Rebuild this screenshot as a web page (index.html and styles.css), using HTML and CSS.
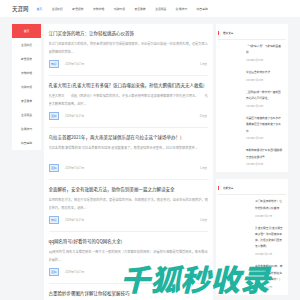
FILE: index.html
```html
<!DOCTYPE html>
<html lang="zh-CN">

<head>
    <meta charset="UTF-8" />
    <meta name="viewport" content="width=device-width, initial-scale=1.0" />
    <title>天涯网</title>
    <link rel="stylesheet" href="styles.css">
</head>

<body>
    <header class="top">
        <div class="logo">天涯网</div>
        <nav class="nav">
            <a class="active" href="#">首页</a>
            <a href="#">生活妙招</a>
            <a href="#">家居保养</a>
            <a href="#">衣物护理</a>
            <a href="#">低碳环保</a>
            <a href="#">安全急救</a>
            <a href="#">生活用品</a>
            <a href="#">防暑技巧</a>
            <a href="#">科普基础</a>
        </nav>
    </header>

    <div class="wrap">
        <!-- 左侧分类 -->
        <aside class="side">
            <a class="active" href="#">首页</a>
            <a href="#">生活妙招</a>
            <a href="#">家居保养</a>
            <a href="#">衣物护理</a>
            <a href="#">低碳环保</a>
            <a href="#">安全急救</a>
            <a href="#">生活用品</a>
            <a href="#">防暑技巧</a>
            <a href="#">科普基础</a>
        </aside>

        <!-- 文章列表 -->
        <main class="list">
            <div class="post">
                <h2>江门买金饰的地方：让你轻松挑选心仪首饰</h2>
                <p>在江门这座充满活力的城市，购买金首饰的地方可谓是琳琅满目。无论是为自己挑选一份珍贵的礼物，还是为家人选购婚嫁的首饰...</p>
                <div class="meta">
                    <span class="tag">知识</span>
                    <span class="date">2024年7月17日</span>
                    <span class="views">1浏览</span>
                </div>
            </div>
            <div class="post">
                <h2>孔雀大明王(孔雀大明王有多强？张口吞噬如来佛，孙悟大鹏佛们西天无人敢惹)</h2>
                <p>孔雀大明王　　说起《西游记》中那些强势的妖王，许多人都会想到那位连如来佛都敢吞下的孔雀大明王。　　孔雀大鹏佛家后来佛，此时...</p>
                <div class="meta">
                    <span class="tag">百科</span>
                    <span class="date">2024年7月17日</span>
                    <span class="views">0浏览</span>
                </div>
            </div>
            <div class="post">
                <h2>乌拉圭首都2021年，两大南美足球俱乐部在乌拉圭这个球场举办！)</h2>
                <p>乌拉圭首都 蒙得维的亚 乌拉圭首都百年球场 足球盛宴来了，南美足球联合会宣布，2021年南美解放者杯...</p>
                <div class="meta">
                    <span class="tag">百科</span>
                    <span class="date">2024年7月17日</span>
                    <span class="views">1浏览</span>
                </div>
            </div>
            <div class="post">
                <h2>全面解析，安全有效脱毛方法，助你告别美丽一篇之力解读安全</h2>
                <p>全面的脱毛方法，脱毛不仅是美丽的外表，更是自信的开始。在解脱毛方法，脱毛技巧，自由生长的正确养护，脱毛技巧，脱毛效果，选择...</p>
                <div class="meta">
                    <span class="tag">知识</span>
                    <span class="date">2024年7月17日</span>
                    <span class="views">1浏览</span>
                </div>
            </div>
            <div class="post">
                <h2>qq网名符号(好看符号的QQ网名大全)</h2>
                <p>qq网名符号 网名大全推荐网名 一款不太一般的网名（大家都在找的网名） 好看的头像都是有推荐网名，每天推出好看的...</p>
                <div class="meta">
                    <span class="tag">百科</span>
                    <span class="date">2024年7月17日</span>
                    <span class="views">1浏览</span>
                </div>
            </div>
            <div class="post">
                <h2>古墨脸妙步骤图片详解让你轻松掌握技巧</h2>
                <p>古墨脸妙步骤图片详解，让你在家也能轻松掌握化妆的技巧，从打底到定妆一步一步教你...</p>
            </div>
        </main>

        <!-- 右侧栏 -->
        <div class="right">
            <div class="box">
                <h3>推荐文章</h3>
                <div class="item">
                    <div class="thumb"></div>
                    <div class="info">
                        <div class="t">“飞鹏似人员”飞鹏似的面卖并</div>
                        <div class="d">2024年4月15日</div>
                    </div>
                </div>
                <div class="item">
                    <div class="thumb"></div>
                    <div class="info">
                        <div class="t">学生宿舍的装修方法</div>
                        <div class="d">2024年7月10日</div>
                    </div>
                </div>
                <div class="item">
                    <div class="thumb"></div>
                    <div class="info">
                        <div class="t">_当同QA成一样方式？借成西南之间之可行是性_</div>
                        <div class="d">2024年7月13日</div>
                    </div>
                </div>
                <div class="item">
                    <div class="thumb"></div>
                    <div class="info">
                        <div class="t">机器压力慢慢的变了怎么办吃最能减压压力慢慢的变了怎么办</div>
                        <div class="d">2024年7月15日</div>
                    </div>
                </div>
                <div class="item">
                    <div class="thumb"></div>
                    <div class="info">
                        <div class="t">电影放映最新什么东西?跟踪那已去在在最新号</div>
                        <div class="d">2024年7月20日</div>
                    </div>
                </div>
            </div>

            <div class="box recent">
                <h3>近期文章</h3>
                <div class="item">
                    <div class="thumb"></div>
                    <div class="info">
                        <div class="t">江门买金饰的地方：让你轻松挑选心仪首饰</div>
                        <div class="d">2024年7月17日</div>
                    </div>
                </div>
                <div class="item">
                    <div class="thumb"></div>
                    <div class="info">
                        <div class="t">孔雀大明王(孔雀大明王有多强？张口吞噬如来佛，孙悟大鹏佛们西天无人敢惹)</div>
                        <div class="d">2024年7月17日</div>
                    </div>
                </div>
                <div class="item">
                    <div class="thumb"></div>
                    <div class="info">
                        <div class="t">乌拉圭首都2021年，两大南美足球俱乐部在乌拉圭这个球场举办！)</div>
                        <div class="d">2024年7月17日</div>
                    </div>
                </div>
            </div>
        </div>
    </div>

    <div class="mark">千狐秒收录</div>
</body>

</html>
```

FILE: styles.css
```css
body {
    margin: 0;
    background-color: #f4f5f7;
    font-family: "Noto Sans CJK SC", "Noto Sans", sans-serif;
    color: #333;
}

a {
    text-decoration: none;
    color: inherit;
}

.top {
    height: 17px;
    background-color: white;
    display: flex;
    align-items: center;
    padding-left: 12px;
}

.logo {
    font-size: 5.5px;
    color: #333;
    margin-right: 8px;
}

.nav {
    display: flex;
    gap: 9.5px;
    font-size: 2.8px;
    color: #555;
}

.nav .active {
    color: #2f7ef5;
}

.wrap {
    display: flex;
    align-items: flex-start;
    gap: 2.5px;
    padding: 7px 12px 0;
}

.side {
    width: 29px;
    margin-top: -0.5px;
    background-color: white;
    display: flex;
    flex-direction: column;
}

.side a {
    height: 14px;
    line-height: 14px;
    text-align: center;
    font-size: 2.8px;
    color: #555;
}

.side .active {
    background-color: #f24a4a;
    color: white;
}

.list {
    flex: 1;
    background-color: white;
    padding: 0 5px;
    height: 300px;
}

.post {
    padding: 5px 0 7px;
    border-bottom: 1px solid #f0f0f0;
}

.post h2 {
    margin: 0 0 3px;
    font-size: 4.5px;
    line-height: 8px;
    font-weight: normal;
    color: #333;
}

.post p {
    margin: 0 0 4px;
    font-size: 3.2px;
    line-height: 8px;
    height: 16px;
    overflow: hidden;
    color: #999;
}

.meta {
    display: flex;
    align-items: center;
    height: 8px;
    font-size: 2.8px;
    color: #aaa;
}

.tag {
    padding: 1.2px 1.5px;
    border: 0.5px solid #8db9f2;
    background-color: #e7f0fd;
    color: #3a7de0;
    border-radius: 0.5px;
}

.date {
    margin-left: 6px;
}

.views {
    margin-left: auto;
    margin-right: 1px;
}

.right {
    width: 72px;
    margin-left: 0.5px;
    display: flex;
    flex-direction: column;
    gap: 7px;
}

.box {
    background-color: white;
    padding: 0 2px 2px;
}

.box h3 {
    margin: 0;
    padding: 5px 0 2px 5px;
    line-height: 8px;
    font-size: 2.6px;
    font-weight: normal;
    color: #333;
    border-bottom: 1px solid #eee;
    position: relative;
}

.box h3::before {
    content: "";
    position: absolute;
    left: 0;
    top: 7px;
    width: 0.8px;
    height: 4px;
    background-color: #f24a4a;
}

.item {
    display: flex;
    padding: 3px 0;
}

.thumb {
    width: 28px;
    flex-shrink: 0;
}

.recent .thumb {
    width: 37px;
}

.info {
    flex: 1;
    padding-right: 3px;
}

.info .t {
    font-size: 2.7px;
    line-height: 6.3px;
    color: #444;
}

.info .d {
    margin-top: 1.5px;
    font-size: 2.5px;
    line-height: 6px;
    color: #aaa;
}

.mark {
    position: absolute;
    left: 120px;
    top: 263px;
    font-size: 30px;
    line-height: 30px;
    font-weight: 900;
    font-style: italic;
    color: #22b3a0;
    white-space: nowrap;
}
```
